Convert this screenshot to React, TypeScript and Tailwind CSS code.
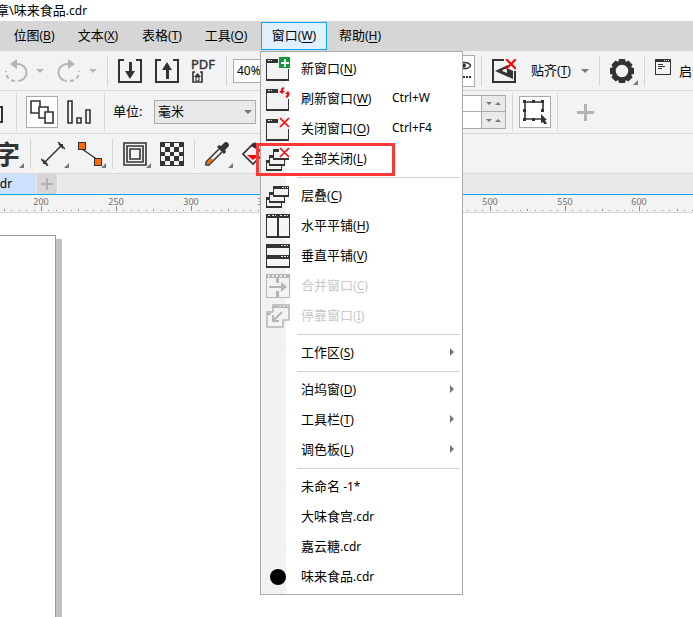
import React, { JSX, ReactNode } from 'react';

const DARK = '#333333';
const FADED = '#b5b5b5';

// ==================== Small shared parts ====================

interface IconProps {
  children: ReactNode;
  width?: number;
  height?: number;
  crisp?: boolean;
}

function Icon({ children, width = 24, height = 24, crisp = true }: IconProps): JSX.Element {
  return (
    <svg
      width={width}
      height={height}
      viewBox={`0 0 ${width} ${height}`}
      fill="none"
      shapeRendering={crisp ? 'crispEdges' : 'auto'}
      className="block shrink-0"
      aria-hidden="true"
    >
      {children}
    </svg>
  );
}

function Divider({ className = '' }: { className?: string }): JSX.Element {
  return <div className={`w-px shrink-0 bg-[#d4d4d4] ${className}`} />;
}

function Caret({ color = '#777777' }: { color?: string }): JSX.Element {
  return (
    <svg width="8" height="4" viewBox="0 0 8 4" className="block shrink-0" aria-hidden="true">
      <path d="M0 0H8L4 4Z" fill={color} />
    </svg>
  );
}

interface ToolButtonProps {
  label: string;
  className?: string;
  corner?: boolean;
  children: ReactNode;
}

function ToolButton({ label, className = '', corner = false, children }: ToolButtonProps): JSX.Element {
  return (
    <button type="button" aria-label={label} className={`relative block shrink-0 ${className}`}>
      {children}
      {corner && (
        <svg width="5" height="5" viewBox="0 0 5 5" className="absolute -right-1 -bottom-0.5" aria-hidden="true">
          <path d="M5 0V5H0Z" fill="#777777" />
        </svg>
      )}
    </button>
  );
}

interface CaptionProps {
  text: string;
  suffix?: string;
  hotkey?: string;
}

/** Menu caption with its access key underlined */
function Caption({ text, suffix, hotkey }: CaptionProps): JSX.Element {
  return (
    <span className="whitespace-nowrap">
      {text}
      {suffix && <span className="text-[12px]">{suffix}</span>}
      {hotkey && (
        <span className="text-[12px]">
          (<span className="underline underline-offset-2">{hotkey}</span>)
        </span>
      )}
    </span>
  );
}

// ==================== Window menu icons ====================

function WindowFrame(): JSX.Element {
  return (
    <g>
      <rect x="1" y="6" width="21" height="16" fill="#f3f3f3" />
      <path d="M0 2H12V6H0ZM0 6H1V24H0ZM0 22H23V24H0ZM22 12H23V24H22Z" fill={DARK} />
      <path d="M2 3H4V4H2ZM5 3H6V4H5Z" fill="#e8e8e8" />
    </g>
  );
}

const redCross = <path d="M14 1L23 10M23 1L14 10" stroke="#ff0000" strokeWidth="1.600" shapeRendering="auto" />;

/** One small window of the cascade, 16 x 11 */
function MiniWindow({ x, y }: { x: number; y: number }): JSX.Element {
  return (
    <g transform={`translate(${x} ${y})`}>
      <path d="M0 0H16V11H0Z" fill={DARK} />
      <path d="M1 3H15V9H1Z" fill="#f3f3f3" />
      <path d="M9 1H11V2H9ZM12 1H13V2H12ZM14 1H15V2H14Z" fill="#e8e8e8" />
    </g>
  );
}

const icons: Record<string, JSX.Element> = {
  newWindow: (
    <Icon>
      <WindowFrame />
      <rect x="13" y="0" width="11" height="11" fill="#0b9b39" />
      <path d="M18 2H19V5H22V6H19V9H18V6H15V5H18Z" fill="#fff" stroke="#fff" strokeWidth="1" />
    </Icon>
  ),
  refresh: (
    <Icon>
      <WindowFrame />
      <path d="M18 1Q15 2 16 5M20 10Q23 9 22 6" stroke="#ff0000" strokeWidth="2" shapeRendering="auto" />
      <path d="M13 4H19L16 7ZM19 7H24L22 4Z" fill="#ff0000" shapeRendering="auto" />
    </Icon>
  ),
  close: (
    <Icon>
      <WindowFrame />
      {redCross}
    </Icon>
  ),
  closeAll: (
    <Icon>
      <MiniWindow x={0} y={13} />
      <MiniWindow x={3} y={8} />
      <MiniWindow x={7} y={2} />
      <path d="M13 0H24V11H13Z" fill="#fff" />
      <path d="M8 5H13V11H8Z" fill="#f3f3f3" />
      {redCross}
    </Icon>
  ),
  cascade: (
    <Icon>
      <MiniWindow x={0} y={13} />
      <MiniWindow x={3} y={8} />
      <MiniWindow x={7} y={2} />
    </Icon>
  ),
  tileH: (
    <Icon>
      <path d="M0 0H24V24H0Z" fill={DARK} />
      <path d="M1 4H11V22H1ZM13 4H23V22H13Z" fill="#f5f5f5" />
      <path d="M2 1H4V2H2ZM6 1H8V2H6ZM9 1H10V2H9ZM14 1H16V2H14ZM18 1H20V2H18ZM21 1H22V2H21Z" fill="#e8e8e8" />
    </Icon>
  ),
  tileV: (
    <Icon>
      <path d="M0 0H24V24H0Z" fill={DARK} />
      <path d="M1 4H23V11H1ZM1 15H23V22H1Z" fill="#f5f5f5" />
      <path d="M15 1H17V2H15ZM18 1H20V2H18ZM21 1H22V2H21ZM15 12H17V13H15ZM18 12H20V13H18ZM21 12H22V13H21Z" fill="#e8e8e8" />
    </Icon>
  ),
  merge: (
    <Icon>
      <path d="M0 0H24V24H0Z" fill={FADED} />
      <path d="M1 4H10V9H13V4H23V23H13V17H10V23H1Z" fill="#f3f3f3" />
      <path d="M2 1H4V3H2ZM6 1H8V3H6ZM10 1H12V3H10ZM14 1H16V3H14ZM18 1H20V3H18Z" fill="#e8e8e8" />
      <path d="M3 13H18" stroke={FADED} strokeWidth="2" />
      <path d="M15 8L21 13L15 18Z" fill={FADED} shapeRendering="auto" />
    </Icon>
  ),
  dock: (
    <Icon>
      <path d="M7 8H1V23H17V16H23V1H7Z" fill="#f3f3f3" shapeRendering="auto" />
      <path d="M7 8H1V23H17V16H23V1H7V8" stroke={FADED} strokeWidth="1.500" shapeRendering="auto" />
      <path d="M7 3H23M1 10H5" stroke={FADED} strokeWidth="2" />
      <path d="M13 2H15M17 2H19M21 2H22" stroke="#eeeeee" />
      <path d="M16 8L7 17M7 11V17H13" stroke={FADED} strokeWidth="2" shapeRendering="auto" />
    </Icon>
  ),
};

// ==================== Menu data ====================

interface MenuEntry {
  text: string;
  suffix?: string;
  hotkey?: string;
  shortcut?: string;
  icon?: string;
  disabled?: boolean;
  submenu?: boolean;
  checked?: boolean;
  marked?: boolean;
}

const menuGroups: MenuEntry[][] = [
  [
    { text: '新窗口', hotkey: 'N', icon: 'newWindow' },
    { text: '刷新窗口', hotkey: 'W', icon: 'refresh', shortcut: 'Ctrl+W' },
    { text: '关闭窗口', hotkey: 'O', icon: 'close', shortcut: 'Ctrl+F4' },
    { text: '全部关闭', hotkey: 'L', icon: 'closeAll', marked: true },
  ],
  [
    { text: '层叠', hotkey: 'C', icon: 'cascade' },
    { text: '水平平铺', hotkey: 'H', icon: 'tileH' },
    { text: '垂直平铺', hotkey: 'V', icon: 'tileV' },
    { text: '合并窗口', hotkey: 'C', icon: 'merge', disabled: true },
    { text: '停靠窗口', hotkey: 'I', icon: 'dock', disabled: true },
  ],
  [{ text: '工作区', hotkey: 'S', submenu: true }],
  [
    { text: '泊坞窗', hotkey: 'D', submenu: true },
    { text: '工具栏', hotkey: 'T', submenu: true },
    { text: '调色板', hotkey: 'L', submenu: true },
  ],
  [
    { text: '未命名', suffix: ' -1*' },
    { text: '大味食宫', suffix: '.cdr' },
    { text: '嘉云糖', suffix: '.cdr' },
    { text: '味来食品', suffix: '.cdr', checked: true },
  ],
];

function MenuRow({ entry }: { entry: MenuEntry }): JSX.Element {
  return (
    <button
      type="button"
      role="menuitem"
      disabled={entry.disabled}
      className={`relative flex h-[30px] w-full items-center pl-[5px] text-left ${
        entry.disabled ? 'text-[#c8c8c8]' : 'text-black'
      }`}
    >
      <span className="flex w-[35px] shrink-0 pt-0.5">
        {entry.icon && icons[entry.icon]}
        {entry.checked && <span className="ml-1 size-4 rounded-full bg-black" />}
      </span>
      <span className="w-[91px] shrink-0">
        <Caption text={entry.text} suffix={entry.suffix} hotkey={entry.hotkey} />
      </span>
      {entry.shortcut && <span className="text-[12px]">{entry.shortcut}</span>}
      {entry.submenu && (
        <svg width="4" height="8" viewBox="0 0 4 8" className="mr-2 ml-auto" aria-hidden="true">
          <path d="M0 0L4 4L0 8Z" fill="#777777" />
        </svg>
      )}
      {entry.marked && (
        <span className="pointer-events-none absolute top-0 -left-[5px] z-10 h-[33px] w-[139px] border-3 border-[#fb3737]" />
      )}
    </button>
  );
}

function WindowMenu(): JSX.Element {
  return (
    <div
      role="menu"
      className="absolute top-full -left-px z-20 mt-px w-[203px] border border-[#ababab] bg-white bg-linear-to-r from-[#f2f2f2] from-[25px] to-white to-[25px] pt-px pb-[3px]"
    >
      {menuGroups.map((group, i) => (
        <div key={i}>
          {i > 0 && <div role="separator" className="mt-1 mr-0.5 mb-0.5 ml-9 h-px bg-[#d4d4d4]" />}
          {group.map((entry) => (
            <MenuRow key={entry.text} entry={entry} />
          ))}
        </div>
      ))}
    </div>
  );
}

// ==================== Bars ====================

function MenuBar(): JSX.Element {
  const before = [
    ['位图', 'B'],
    ['文本', 'X'],
    ['表格', 'T'],
    ['工具', 'O'],
  ];
  return (
    <nav className="flex h-[30px] bg-[#d6d6d6] py-px pl-0.5">
      {before.map(([text, hotkey]) => (
        <button key={text} type="button" className="w-16 shrink-0 pb-0.5">
          <Caption text={text} hotkey={hotkey} />
        </button>
      ))}
      <div className="relative ml-[3px] shrink-0">
        <button type="button" aria-expanded="true" className="h-7 w-[66px] border border-[#00a8ff] bg-[#e0f0ff] pb-0.5">
          <Caption text="窗口" hotkey="W" />
        </button>
        <WindowMenu />
      </div>
      <button type="button" className="w-[66px] shrink-0 pb-0.5">
        <Caption text="帮助" hotkey="H" />
      </button>
    </nav>
  );
}

function UndoArrow(): JSX.Element {
  return (
    <g>
      <path d="M9 5H14A8.500 8.500 0 0 1 14 22" stroke={FADED} strokeWidth="2" />
      <path d="M6 5L13 0V10Z" fill={FADED} />
      <path d="M11 22A9 9 0 0 1 2 12" stroke={FADED} strokeWidth="2" strokeDasharray="4 3" />
    </g>
  );
}

function StandardBar(): JSX.Element {
  return (
    <div className="flex h-10 overflow-hidden border-b border-[#d9d9d9] bg-[#f3f3f3]">
      <div className="flex w-[463px] shrink-0 items-center overflow-hidden pl-1">
        <ToolButton label="撤销">
          <Icon crisp={false}>
            <UndoArrow />
          </Icon>
        </ToolButton>
        <div className="ml-2">
          <Caret color={FADED} />
        </div>
        <ToolButton label="重做" className="ml-[13px]">
          <Icon crisp={false}>
            <g transform="translate(24 0) scale(-1 1)">
              <UndoArrow />
            </g>
          </Icon>
        </ToolButton>
        <div className="ml-2">
          <Caret color={FADED} />
        </div>
        <Divider className="ml-[10px] h-[30px]" />
        <ToolButton label="导入" className="ml-[10px]">
          <Icon>
            <path d="M6 1H1V23H23V1H18" stroke={DARK} strokeWidth="2" />
            <path d="M11 3H13V13H11Z" fill={DARK} stroke={DARK} />
            <path d="M7 12H17L12 20Z" fill={DARK} shapeRendering="auto" />
          </Icon>
        </ToolButton>
        <ToolButton label="导出" className="ml-[13px]">
          <Icon>
            <path d="M6 1H1V23H23V1H18" stroke={DARK} strokeWidth="2" />
            <path d="M11 10H13V19H11Z" fill={DARK} stroke={DARK} />
            <path d="M7 11H17L12 3Z" fill={DARK} shapeRendering="auto" />
          </Icon>
        </ToolButton>
        <ToolButton label="发布为 PDF" className="ml-3">
          <Icon width={26} height={24} crisp={false}>
            <text x="0" y="10" fontSize="13" fill={DARK} stroke={DARK} strokeWidth="0.400">
              PDF
            </text>
            <path d="M4 13H2V23H11V13H9" stroke={DARK} strokeWidth="1.600" />
            <path d="M5 22V18H8V22Z" stroke={DARK} />
            <path d="M3 18H10L6.500 14Z" fill={DARK} />
          </Icon>
        </ToolButton>
        <Divider className="ml-[9px] h-[30px]" />
        <input
          aria-label="缩放级别"
          defaultValue="40%"
          className="ml-[6px] h-6 w-20 border border-[#ababab] bg-white pl-[3px] text-[12px] outline-none"
        />
      </div>
      <div className="flex shrink-0 items-center">
        <button
          type="button"
          aria-label="显示标尺"
          className="flex h-8 w-3 items-center justify-end border border-l-0 border-[#ababab] bg-white pr-[3px]"
        >
          <Icon width={8} height={20} crisp={false}>
            <path d="M0 1.500Q6 1 7.500 4.500Q6 8 0 7.500" stroke={DARK} strokeWidth="1.500" />
            <circle cx="1" cy="4.500" r="2" fill={DARK} />
            <path d="M0 15H2V17H0ZM3 15H5V17H3ZM6 15H8V17H6Z" fill={DARK} />
          </Icon>
        </button>
        <Divider className="ml-[6px] h-[30px]" />
        <ToolButton label="关闭贴齐" className="ml-[10px]">
          <Icon>
            <path d="M12 1H1V23H23V12" stroke={DARK} strokeWidth="2" />
            <path
              d="M3 12L16 6V8L14 10H12L10 12L15 14V10H17L21 12V20Z"
              fill={DARK}
              shapeRendering="auto"
            />
            <path d="M14 0L24 10M24 0L14 10" stroke="#ff0000" strokeWidth="2" shapeRendering="auto" />
          </Icon>
        </ToolButton>
        <button type="button" className="ml-[15px] flex items-center gap-2.5">
          <Caption text="贴齐" hotkey="T" />
          <Caret />
        </button>
        <Divider className="ml-[10px] h-[30px]" />
        <ToolButton label="选项" className="ml-[10px]" corner>
          <Icon crisp={false}>
            <circle cx="12" cy="12" r="8" stroke={DARK} strokeWidth="3.500" />
            {[0, 45, 90, 135, 180, 225, 270, 315].map((angle) => (
              <path key={angle} d="M8 4L9 0H15L16 4Z" fill={DARK} transform={`rotate(${angle} 12 12)`} />
            ))}
          </Icon>
        </ToolButton>
        <Divider className="ml-[10px] h-[30px]" />
        <button type="button" className="ml-[10px] flex items-center gap-2 whitespace-nowrap">
          <span className="pb-2">
            <Icon width={16} height={16}>
              <path d="M0 0H16V16H0Z" fill={DARK} />
              <path d="M1 3H15V15H1ZM9 1H10V2H9ZM11 1H12V2H11ZM13 1H14V2H13Z" fill="#f3f3f3" />
              <path d="M3 5H8V6H3ZM3 7H10V8H3ZM3 9H7V10H3Z" fill={DARK} />
            </Icon>
          </span>
          启动
        </button>
      </div>
    </div>
  );
}

function Spinner({ label }: { label: string }): JSX.Element {
  return (
    <div className="flex h-4">
      <input aria-label={label} className="w-[18px] bg-white outline-none" />
      <div className="flex w-[25px] items-center justify-around border-x border-[#ababab] bg-[#e9e9e9] px-0.5">
        <button type="button" aria-label={`${label} 减`}>
          <svg width="6" height="3" viewBox="0 0 6 3" className="block" aria-hidden="true">
            <path d="M0 0H6L3 3Z" fill="#777777" />
          </svg>
        </button>
        <button type="button" aria-label={`${label} 加`}>
          <svg width="6" height="3" viewBox="0 0 6 3" className="block" aria-hidden="true">
            <path d="M0 3H6L3 0Z" fill="#777777" />
          </svg>
        </button>
      </div>
    </div>
  );
}

function PropertyBar(): JSX.Element {
  return (
    <div className="flex h-[43px] overflow-hidden border-b border-[#d9d9d9] bg-[#f3f3f3]">
      <div className="flex w-[463px] shrink-0 items-center overflow-hidden">
        <div className="mt-1 h-[17px] w-[3px] shrink-0 border-2 border-l-0 border-[#333333]" />
        <Divider className="ml-[13px] h-[38px]" />
        <ToolButton label="所有页面" className="ml-[9px] border border-[#ababab] bg-white p-[3px]">
          <Icon crisp={false}>
            <path d="M1 1H10V13H1Z" stroke={DARK} strokeWidth="1.600" fill="#fff" />
            <path d="M9 7H18V18H9Z" stroke={DARK} strokeWidth="1.600" fill="#fff" />
            <path d="M15 12H23V23H15Z" stroke={DARK} strokeWidth="1.600" fill="#fff" />
          </Icon>
        </ToolButton>
        <ToolButton label="当前页" className="ml-[9px]">
          <Icon crisp={false}>
            <path d="M1 1H5V23H1ZM10 18H14V23H10ZM19 10H23V23H19Z" stroke={DARK} strokeWidth="1.600" />
          </Icon>
        </ToolButton>
        <Divider className="ml-[13px] h-[38px]" />
        <label htmlFor="units" className="ml-2 w-[41px] shrink-0 pb-0.5 whitespace-nowrap">
          单位:
        </label>
        <div className="relative shrink-0">
          <select
            id="units"
            className="block h-6 w-[102px] appearance-none border border-[#ababab] bg-[#e9e9e9] pb-0.5 pl-[3px] outline-none"
          >
            <option>毫米</option>
          </select>
          <div className="pointer-events-none absolute top-2.5 right-1">
            <Caret />
          </div>
        </div>
      </div>
      <div className="flex shrink-0 items-center">
        <div className="divide-y divide-[#ababab] border-y border-[#ababab]">
          <Spinner label="再制距离 X" />
          <Spinner label="再制距离 Y" />
        </div>
        <Divider className="ml-[6px] h-[38px]" />
        <ToolButton label="视为已填充" className="ml-[6px] border border-[#ababab] bg-white p-[3px]">
          <Icon>
            <path d="M18 19H2V2H20V12" stroke={DARK} strokeWidth="1.600" shapeRendering="auto" />
            <path
              d="M0 0H3V3H0ZM9 0H12V3H9ZM18 0H21V3H18ZM0 9H3V12H0ZM18 9H21V12H18ZM0 18H3V21H0ZM9 18H12V21H9Z"
              fill={DARK}
            />
            <path d="M18 14L24 20L22 20L24 24H21L20 22L18 23Z" fill={DARK} shapeRendering="auto" />
          </Icon>
        </ToolButton>
        <Divider className="ml-[6px] h-[38px]" />
        <ToolButton label="自定义" className="ml-[19px]">
          <Icon width={17} height={17}>
            <path d="M7 0H10V7H17V10H10V17H7V10H0V7H7Z" fill="#b3b3b3" />
          </Icon>
        </ToolButton>
      </div>
    </div>
  );
}

const checkerEdges = [1, 5, 10, 14, 19, 23];

function Toolbox(): JSX.Element {
  return (
    <div className="flex h-10 items-center overflow-hidden border-b border-[#d9d9d9] bg-[#f3f3f3]">
      <ToolButton label="文本工具" corner className="-ml-[6px] h-6 w-[26px] text-[26px] leading-6 font-bold text-[#333333]">
        字
      </ToolButton>
      <Divider className="ml-[10px] h-[30px]" />
      <ToolButton label="平行度量" className="ml-[10px]" corner>
        <Icon crisp={false}>
          <path d="M3 21L21 3M0 17L7 24M17 0L24 7" stroke={DARK} strokeWidth="1.500" />
          <path d="M2 22V17L7 22ZM22 2H17L22 7Z" fill={DARK} />
        </Icon>
      </ToolButton>
      <ToolButton label="连接器" className="ml-[13px]" corner>
        <Icon>
          <path d="M4 7L20 18" stroke={DARK} strokeWidth="1.500" shapeRendering="auto" />
          <path d="M0 0H8V8H0ZM16 16H24V24H16Z" fill={DARK} />
          <path d="M1 1H7V7H1ZM17 17H23V23H17Z" fill="#ff6a00" />
        </Icon>
      </ToolButton>
      <Divider className="ml-[10px] h-[30px]" />
      <ToolButton label="轮廓图" className="ml-[10px]" corner>
        <Icon crisp={false}>
          <path d="M1 1H23V23H1Z" stroke={DARK} strokeWidth="1.600" />
          <path d="M4 4H20V20H4Z" stroke={DARK} strokeWidth="1.600" />
          <path d="M7 7H17V17H7Z" stroke={DARK} strokeWidth="1.600" />
        </Icon>
      </ToolButton>
      <ToolButton label="透明度" className="ml-[13px]">
        <Icon>
          <path d="M0 0H24V24H0Z" fill={DARK} />
          {[0, 1, 2, 3, 4].map((row) =>
            (row % 2 ? [0, 2, 4] : [1, 3]).map((col) => (
              <rect
                key={`${row}-${col}`}
                x={checkerEdges[col]}
                y={checkerEdges[row]}
                width={checkerEdges[col + 1] - checkerEdges[col]}
                height={checkerEdges[row + 1] - checkerEdges[row]}
                fill="#f3f3f3"
              />
            )),
          )}
        </Icon>
      </ToolButton>
      <Divider className="ml-[10px] h-[30px]" />
      <ToolButton label="颜色滴管" className="ml-[10px]" corner>
        <Icon crisp={false}>
          <path d="M14 7L1 20V23H4L17 10" fill="#f3f3f3" stroke={DARK} strokeWidth="1.500" />
          <path d="M2 20L6 16L8 18L4 22H2Z" fill="#ff6a00" />
          <path d="M12 5L14 3L16 4L19 1Q21 -1 23 1Q25 3 23 5L20 8L21 10L19 12Z" fill={DARK} />
        </Icon>
      </ToolButton>
      <ToolButton label="交互式填充" className="ml-[13px]" corner>
        <Icon crisp={false}>
          <path d="M11 2L21 12L11 22L1 12Z" fill="#f3f3f3" stroke={DARK} strokeWidth="1.600" />
          <path d="M5 13H17L11 18Z" fill="#ff0000" />
          <path d="M9 4L13 0L18 8L14 7Z" fill={DARK} />
        </Icon>
      </ToolButton>
    </div>
  );
}

function DocumentTabs(): JSX.Element {
  return (
    <div className="flex h-[21px] border-b border-[#00a8ff] bg-[#e9e9e9]">
      <button type="button" className="flex w-9 items-center overflow-hidden bg-[#cce0ff] text-[12px]">
        <span className="-ml-1.5">cdr</span>
      </button>
      <button
        type="button"
        aria-label="新建文档"
        className="ml-px flex w-[21px] items-center justify-center border-r border-[#f3f3f3] bg-[#d6d6d6]"
      >
        <Icon width={12} height={12}>
          <path d="M5 0H7V5H12V7H7V12H5V7H0V5H5Z" fill="#b0b0b0" />
        </Icon>
      </button>
    </div>
  );
}

function Ruler(): JSX.Element {
  // one tick per 5 mm, 15 px per 10 mm at this zoom level
  const ticks = Array.from({ length: 180 }, (_, i) => 170 + i * 5);
  const toX = (value: number) => Math.round(41 + (value - 200) * 1.496);
  return (
    <svg className="block h-[18px] w-full border-b border-[#d4d4d4] bg-[#f3f3f3]" aria-label="标尺">
      {ticks.map((value) => {
        const size = value % 50 === 0 ? 5 : value % 25 === 0 ? 2 : 1;
        return <rect key={value} x={toX(value)} y={16 - size} width="1" height={size} fill="#888888" />;
      })}
      {ticks
        .filter((value) => value % 50 === 0)
        .map((value) => (
          <text key={value} x={toX(value)} y="10" textAnchor="middle" fontSize="9" fill="#707070">
            {value}
          </text>
        ))}
    </svg>
  );
}

export default function App(): JSX.Element {
  return (
    <div className="flex min-h-screen flex-col overflow-hidden bg-white font-['Noto_Sans','Noto_Sans_CJK_SC',sans-serif] text-[13px] leading-5 text-black">
      <header className="h-[21px] overflow-hidden whitespace-nowrap">
        <h1 className="-ml-1">
          章\味来食品<span className="text-[12px]">.cdr</span>
        </h1>
      </header>
      <MenuBar />
      <StandardBar />
      <PropertyBar />
      <Toolbox />
      <DocumentTabs />
      <Ruler />
      {/* Drawing area: page edge and its shadow */}
      <main className="flex flex-1 pt-[22px]">
        <div className="w-14 border-t border-r border-[#999999]" />
        <div className="mt-1 w-1.5 bg-[#c0c0c0]" />
      </main>
    </div>
  );
}
